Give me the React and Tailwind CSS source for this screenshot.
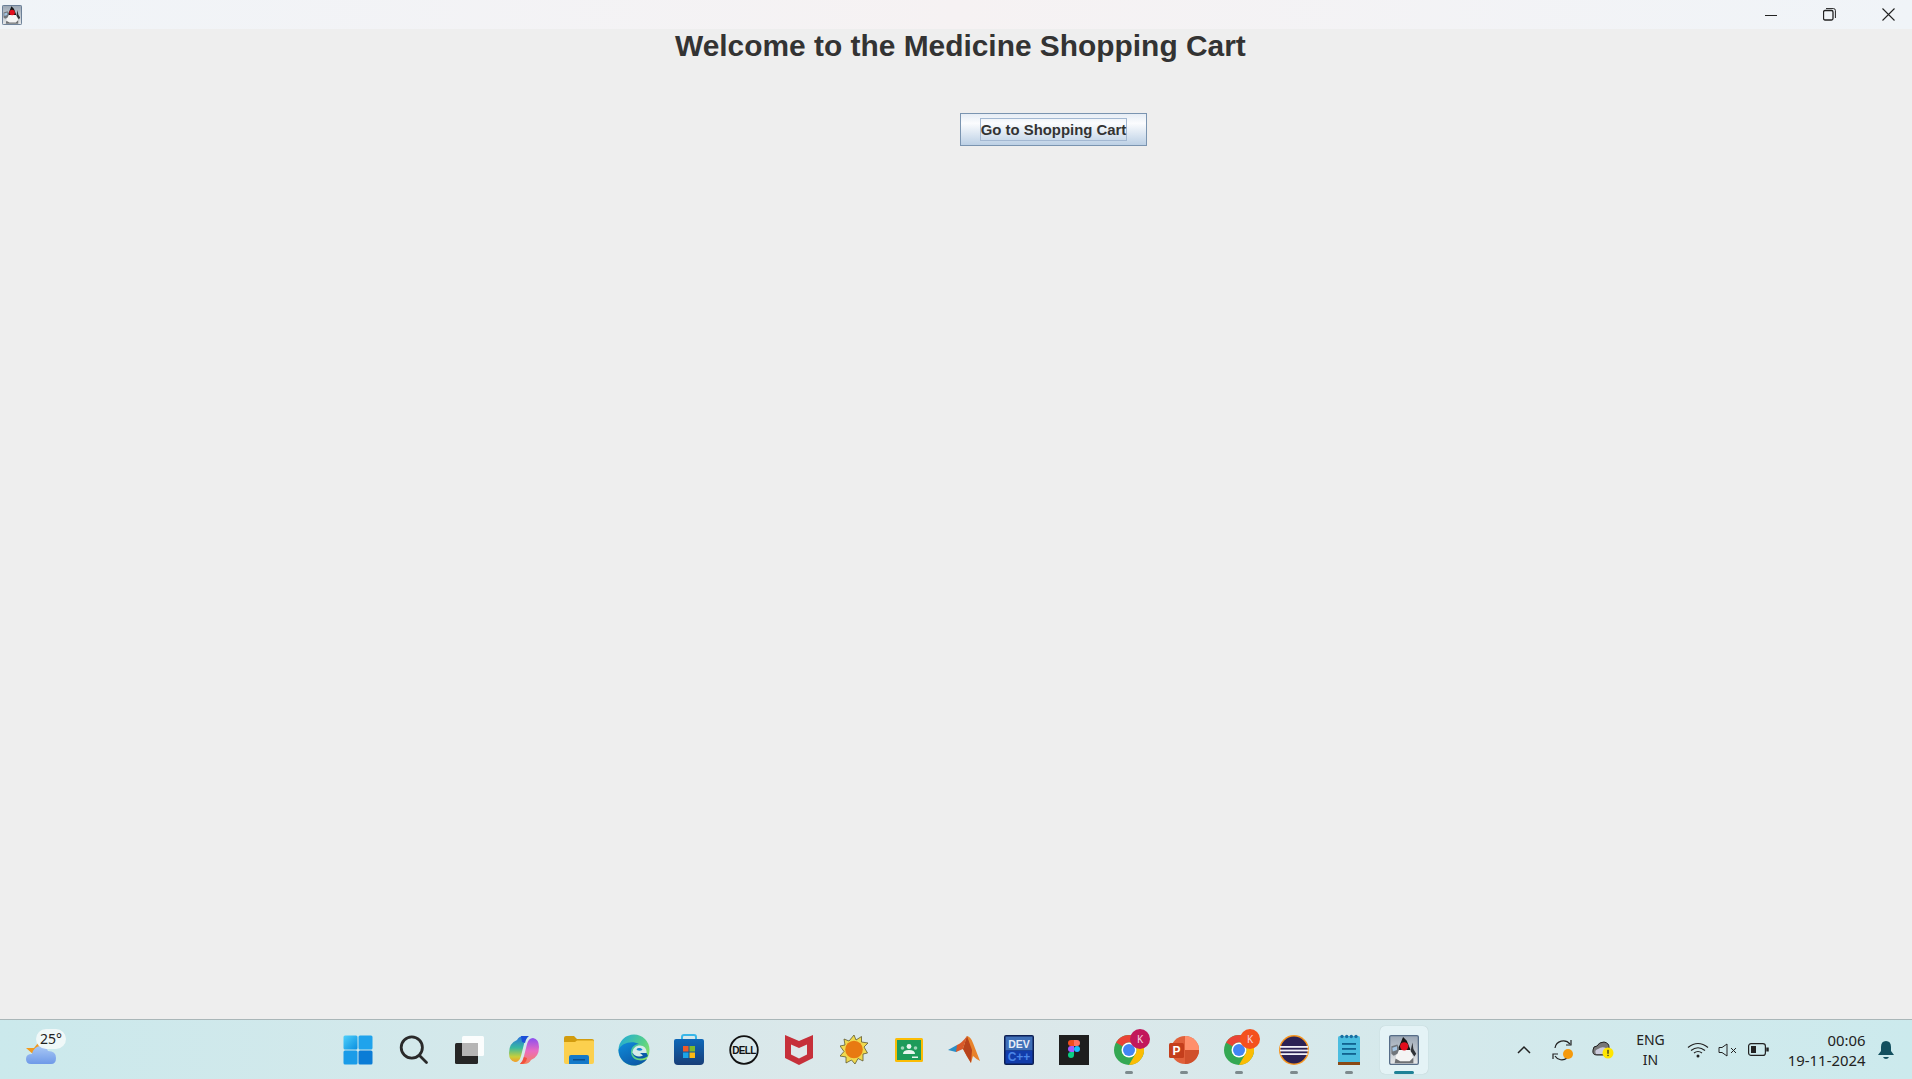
import React from "react";

const Java = ({ s = 32, id = "j" }) => (
  <svg width={s} height={s} viewBox="0 0 32 32">
    <defs>
      <linearGradient id={id} x1="0" y1="0" x2="0" y2="1">
        <stop offset="0" stopColor="#9aa6b4" />
        <stop offset="0.6" stopColor="#c6ccd3" />
        <stop offset="1" stopColor="#e8e9ea" />
      </linearGradient>
    </defs>
    <rect x="0.7" y="0.7" width="30.6" height="30.6" rx="1.5" fill={`url(#${id})`} stroke="#566d88" strokeWidth="1.4" />
    <path d="M9 15 L23 15 L26 25 L25 29 L7 29 L7 25 Z" fill="#f4f4f4" />
    <path d="M7 25 L12 28 L22 28 L26 24 L26 30 L6 30 Z" fill="#6f7174" />
    <path d="M15 2 L19 6 L23 16 L9 16 L13 7 Z" fill="#161616" />
    <path d="M2.5 12 L9 10 L11 15 L9 20 L5 22 L2.5 20 Z" fill="#70757b" />
    <path d="M3.5 13.5 L8.5 12 L8.5 16 L4 17.5 Z" fill="#a4c4e2" />
    <path d="M25 8 L26 15 L29 20 L27 23 L23 17 Z" fill="#2f3236" />
    <circle cx="16.2" cy="12" r="4.4" fill="#e30d1c" />
  </svg>
);

const Win = () => (
  <svg width="30" height="30" viewBox="0 0 30 30" className="-ml-[3px]">
    <defs>
      <linearGradient id="wa" x1="0" y1="0" x2="1" y2="1">
        <stop offset="0" stopColor="#4fd0fb" />
        <stop offset="1" stopColor="#0a8fe0" />
      </linearGradient>
    </defs>
    <rect x="0.5" y="0.5" width="14" height="14" rx="1.5" fill="url(#wa)" />
    <rect x="15.5" y="0.5" width="14" height="14" rx="1.5" fill="#1fa3ec" />
    <rect x="0.5" y="15.5" width="14" height="14" rx="1.5" fill="#1a9ce8" />
    <rect x="15.5" y="15.5" width="14" height="14" rx="1.5" fill="#0b7cd6" />
  </svg>
);

const Search = () => (
  <svg width="30" height="30" viewBox="0 0 30 30" fill="none" stroke="#2a2a2a" strokeWidth="2.8" strokeLinecap="round">
    <circle cx="12.8" cy="12.5" r="10.6" />
    <path d="M20.5 20.5 L27.5 27.5" />
  </svg>
);

const TaskView = () => (
  <svg width="30" height="30" viewBox="0 0 30 30">
    <rect x="1" y="8" width="23" height="21" rx="1.5" fill="#262626" />
    <rect x="8" y="1" width="22" height="20" rx="1.5" fill="#ffffff" fillOpacity="0.9" />
    <rect x="8" y="8" width="16" height="13" fill="#b5b5b5" />
  </svg>
);

const Copilot = () => (
  <svg width="30" height="28" viewBox="0 0 30 28">
    <defs>
      <linearGradient id="ca" x1="0" y1="0" x2="0" y2="1">
        <stop offset="0" stopColor="#2a6fe0" />
        <stop offset="0.45" stopColor="#37b8a0" />
        <stop offset="0.8" stopColor="#c9cf3a" />
        <stop offset="1" stopColor="#f59a2a" />
      </linearGradient>
      <linearGradient id="cb" x1="0" y1="0" x2="0" y2="1">
        <stop offset="0" stopColor="#8a4ff0" />
        <stop offset="0.5" stopColor="#ea6bc0" />
        <stop offset="1" stopColor="#f5825a" />
      </linearGradient>
    </defs>
    <path d="M8 4 Q10 0 15 0 L19 0 Q16 3 15 8 L12 20 Q10.5 26 6 26 Q0 25 0 17 Q0 7 8 4 Z" fill="url(#ca)" />
    <path d="M22 24 Q20 28 15 28 L11 28 Q14 25 15 20 L18 8 Q19.5 2 24 2 Q30 3 30 11 Q30 21 22 24 Z" fill="url(#cb)" />
    <path d="M12 0 L20 0 Q17 2 16 7 L13 6 Z" fill="#1b4fd8" />
    <path d="M11 28 Q14 25 15 21 L18 22 Q17 28 12 28 Z" fill="#f2503c" />
  </svg>
);

const Files = () => (
  <svg width="30" height="28" viewBox="0 0 30 28">
    <path d="M0 2 Q0 0 2 0 L10 0 L13 3 L28 3 Q30 3 30 5 L30 8 L0 8 Z" fill="#d29c0e" />
    <path d="M0 6 L11 6 L13 4.5 L29 4.5 Q30 4.5 30 6 L30 26 Q30 28 28 28 L2 28 Q0 28 0 26 Z" fill="#fcd04e" />
    <path d="M5 28 L5 21 Q5 19 7 19 L23 19 Q25 19 25 21 L25 28 Z" fill="#1479c9" />
    <rect x="9" y="23" width="12" height="1.5" fill="#0a4f8e" />
  </svg>
);

const Edge = () => (
  <svg width="32" height="32" viewBox="0 0 32 32">
    <defs>
      <linearGradient id="ea" x1="0" y1="0" x2="1" y2="0.6">
        <stop offset="0" stopColor="#1ea8df" />
        <stop offset="0.7" stopColor="#55d08a" />
        <stop offset="1" stopColor="#85e06a" />
      </linearGradient>
      <linearGradient id="eb" x1="0" y1="0" x2="0.6" y2="1">
        <stop offset="0" stopColor="#0f8ddb" />
        <stop offset="1" stopColor="#0c5aa8" />
      </linearGradient>
    </defs>
    <circle cx="16" cy="16" r="15.5" fill="url(#ea)" />
    <path d="M.5 16 C.5 25 8 31.5 16 31.5 C21 31.5 26 29 29 25 C24 27.5 16 27 13.5 21 C11.5 15 15.5 10 21 10 C14 6 3 9 .5 16 Z" fill="url(#eb)" />
    <path d="M14.5 19 C14.5 14 18 11.5 22 11.5 C26 11.5 29 14.5 28.5 19 Z" fill="#d6ebe9" />
    <path d="M18.5 15.5 C19.5 13.5 23.5 13.5 24.5 15.8 C23 17 20 17 18.5 15.5 Z" fill="#1587cf" />
    <path d="M14.5 19 C15.5 24 23 27 30 22 L28.5 19 Z" fill="#0b5ba8" />
    <path d="M14.8 19 C16 22 21 23.5 25 21.5 L22 19 Z" fill="#d6ebe9" />
  </svg>
);

const Store = () => (
  <svg width="30" height="32" viewBox="0 0 30 32">
    <defs>
      <linearGradient id="sa" x1="0" y1="0" x2="0" y2="1">
        <stop offset="0" stopColor="#0f68b8" />
        <stop offset="1" stopColor="#183e78" />
      </linearGradient>
    </defs>
    <path d="M8 6 L8 3 Q8 1 10 1 L20 1 Q22 1 22 3 L22 6" fill="none" stroke="#38b6e8" strokeWidth="2" />
    <path d="M0 7 Q0 5 2 5 L28 5 Q30 5 30 7 L30 27 Q30 31 26 31 L4 31 Q0 31 0 27 Z" fill="url(#sa)" />
    <rect x="9" y="12" width="5.5" height="5.5" fill="#f05a28" />
    <rect x="15.5" y="12" width="5.5" height="5.5" fill="#7fba2b" />
    <rect x="9" y="18.5" width="5.5" height="5.5" fill="#1ba4e8" />
    <rect x="15.5" y="18.5" width="5.5" height="5.5" fill="#fdb913" />
  </svg>
);

const Dell = () => (
  <svg width="30" height="30" viewBox="0 0 30 30">
    <circle cx="15" cy="15" r="13.8" fill="none" stroke="#111" strokeWidth="1.8" />
    <text x="15" y="18.6" textAnchor="middle" fontFamily="Liberation Sans, sans-serif" fontWeight="700" fontSize="10" letterSpacing="-0.6" fill="#111">DELL</text>
  </svg>
);

const McAfee = () => (
  <svg width="28" height="30" viewBox="0 0 28 30">
    <path d="M0 0 L14 6 L28 0 L28 23 L14 30 L0 23 Z" fill="#c6303a" />
    <path d="M6 9.5 L14 13 L22 9.5 L22 19.5 L14 23.5 L6 19.5 Z" fill="#dfe8ea" />
  </svg>
);

const Sun = () => (
  <svg width="28" height="30" viewBox="0 0 28 30">
    <path d="M14 0 L16 5 L21.5 1.5 L21.5 7 L28 8 L24 12 L27.5 18 L23 19 L23 26 L18 23.5 L15 29 L11.5 25 L6 28 L6 22 L0 21 L4 16.5 L0 11 L5 10 L4 4 L9 6 Z" fill="#f0d94e" stroke="#5f5a30" strokeWidth="0.8" />
    <circle cx="14" cy="14.5" r="8.8" fill="#e87a12" />
  </svg>
);

const Classroom = () => (
  <svg width="28" height="24" viewBox="0 0 28 24">
    <rect width="28" height="24" rx="1.5" fill="#fbbc04" />
    <rect x="2" y="2" width="24" height="20" fill="#1e9b5a" />
    <circle cx="14" cy="8.5" r="2.4" fill="#e9f5ee" />
    <circle cx="7.5" cy="10" r="1.8" fill="#9fd6b8" />
    <circle cx="20.5" cy="10" r="1.8" fill="#9fd6b8" />
    <path d="M8 16 Q8 12 14 12 Q20 12 20 16 Z" fill="#e9f5ee" />
    <rect x="17" y="18.5" width="6" height="1.5" fill="#e9f5ee" />
  </svg>
);

const Matlab = () => (
  <svg width="32" height="30" viewBox="0 0 32 30">
    <path d="M0 15 L9 10 L13 13 L8 17 Z" fill="#2b8fc7" />
    <path d="M9 10 Q14 8 19 1 L15 14 L8 17 Z" fill="#d9592a" />
    <path d="M19 1 Q23 2 25 8 L32 26 Q28 24 25 21 L23 28 Q18 20 15 14 Z" fill="#e8832b" />
    <path d="M19 1 L24 15 L23 28 Q18 20 15 14 Z" fill="#b8431c" />
  </svg>
);

const DevCpp = () => (
  <svg width="30" height="30" viewBox="0 0 30 30">
    <rect width="30" height="30" rx="2" fill="#0c1f55" />
    <rect x="1.5" y="1.5" width="27" height="14" fill="#3f6fb8" />
    <rect x="1.5" y="15.5" width="27" height="13" fill="#123caa" />
    <text x="15" y="12.5" textAnchor="middle" fontFamily="Liberation Sans, sans-serif" fontWeight="700" fontSize="10.5" fill="#e8eef8">DEV</text>
    <text x="15" y="26" textAnchor="middle" fontFamily="Liberation Sans, sans-serif" fontWeight="700" fontSize="12" fill="#4b86e8">C++</text>
  </svg>
);

const Figma = () => (
  <svg width="30" height="30" viewBox="0 0 30 30">
    <rect width="30" height="30" fill="#1e1e1e" />
    <path d="M9 8 A3 3 0 0 1 12 5 L15 5 L15 11 L12 11 A3 3 0 0 1 9 8 Z" fill="#f24e1e" />
    <path d="M15 5 L18 5 A3 3 0 0 1 18 11 L15 11 Z" fill="#ff7262" />
    <path d="M9 14 A3 3 0 0 1 12 11 L15 11 L15 17 L12 17 A3 3 0 0 1 9 14 Z" fill="#a259ff" />
    <circle cx="18" cy="14" r="3" fill="#1abcfe" />
    <path d="M9 20 A3 3 0 0 1 12 17 L15 17 L15 20 A3 3 0 0 1 9 20 Z" fill="#0acf83" />
  </svg>
);

const ChromeBase = () => (
  <svg width="30" height="30" viewBox="0 0 30 30">
    <circle cx="15" cy="15" r="15" fill="#34a853" />
    <path d="M15 0 A15 15 0 0 1 28 7.5 L15 7.5 A7.5 7.5 0 0 0 8.5 11.25 L2 7.5 A15 15 0 0 1 15 0 Z" fill="#ea4335" />
    <path d="M28 7.5 A15 15 0 0 1 15 30 L21.5 18.75 A7.5 7.5 0 0 0 21.5 11.25 L15 7.5 Z" fill="#fbbc04" />
    <circle cx="15" cy="15" r="7.5" fill="#fff" />
    <circle cx="15" cy="15" r="6" fill="#4285f4" />
  </svg>
);

const Chrome = ({ color }) => (
  <div className="relative w-[30px] h-[30px]">
    <ChromeBase />
    <div className={`absolute top-[-6px] left-[16px] w-5 h-5 rounded-full flex items-center justify-center text-[10px] leading-none text-[#f6d7e2] ${color}`}>K</div>
  </div>
);

const Ppt = () => (
  <svg width="30" height="30" viewBox="0 0 30 30">
    <circle cx="16" cy="15" r="14" fill="#e0603a" />
    <path d="M16 1 A14 14 0 0 1 30 15 L16 15 Z" fill="#ff8f6b" />
    <path d="M16 15 L30 15 A14 14 0 0 1 16 29 Z" fill="#d0502c" />
    <rect x="0" y="8" width="15" height="15" rx="1.5" fill="#c43e1c" />
    <text x="7.5" y="20" textAnchor="middle" fontFamily="Liberation Sans, sans-serif" fontWeight="700" fontSize="12" fill="#fff">P</text>
  </svg>
);

const Eclipse = () => (
  <svg width="30" height="30" viewBox="0 0 30 30">
    <circle cx="15" cy="15" r="15" fill="#f7941e" />
    <circle cx="15" cy="15" r="13.5" fill="#2c2255" />
    <rect x="1" y="11" width="28" height="1.8" fill="#f2f0f8" />
    <rect x="1" y="14.6" width="28.5" height="1.8" fill="#f2f0f8" />
    <rect x="1.5" y="18.2" width="27" height="1.8" fill="#f2f0f8" />
  </svg>
);

const Notepad = () => (
  <svg width="24" height="32" viewBox="0 0 24 32">
    <rect x="1" y="2" width="22" height="27" rx="1.5" fill="#4bbde0" />
    <rect x="1" y="28" width="22" height="3" fill="#8a4a16" />
    <g fill="#1a6ea0">
      <circle cx="5" cy="2.5" r="1.7" />
      <circle cx="9.7" cy="2.5" r="1.7" />
      <circle cx="14.3" cy="2.5" r="1.7" />
      <circle cx="19" cy="2.5" r="1.7" />
    </g>
    <g fill="#11628f">
      <rect x="5" y="9" width="14" height="1.8" />
      <rect x="5" y="14" width="14" height="1.8" />
      <rect x="5" y="19" width="14" height="1.8" />
    </g>
  </svg>
);

const Weather = () => (
  <div className="relative w-[50px] h-[40px]">
    <svg width="30" height="21" viewBox="0 0 30 21" className="absolute left-[1px] top-[13px]">
      <defs>
        <linearGradient id="cl" x1="0" y1="0" x2="0" y2="1">
          <stop offset="0" stopColor="#a9c8f5" />
          <stop offset="1" stopColor="#6f9ae8" />
        </linearGradient>
      </defs>
      <path d="M0 5 L8 5 L12 0 L16 8 L8 12 Z" fill="#f39a1d" />
      <path d="M5 21 Q0 21 0 16 Q0 11 6 11 Q8 3 15 3 Q20 3 22 8 Q30 8 30 15 Q30 21 25 21 Z" fill="url(#cl)" />
    </svg>
    <div className="absolute left-[11px] top-[-1px] w-[30px] h-[20px] rounded-full bg-[#f4f9f9]/90 text-[14px] leading-[20px] text-center text-[#222]">25°</div>
  </div>
);

const Icon = ({ children, running, active }) => (
  <div className="relative w-[55px] h-[50px] flex items-center justify-center">
    {active && <div className="absolute left-[3px] top-[1px] w-[48px] h-[48px] rounded-[5px] bg-[#e4f3f6] shadow-[0_0_1px_rgba(0,0,0,0.2)]" />}
    <div className="relative flex items-center justify-center">{children}</div>
    {running && <div className="absolute left-[23px] bottom-px w-2 h-[3px] rounded-full bg-[#7d8a8d]" />}
    {active && <div className="absolute left-[17px] bottom-px w-5 h-[3px] rounded-full bg-[#1f8296]" />}
  </div>
);

export default function App() {
  return (
    <div className="w-[1912px] h-[1079px] overflow-hidden flex flex-col bg-[#eeeeee] font-['Liberation_Sans',Arial,sans-serif]">
      {/* Window title bar */}
      <div className="h-[29px] shrink-0 flex items-center bg-gradient-to-r from-[#f0f4f8] via-[#f6f2f3] to-[#f0f4f8]">
        <div className="ml-[2px]"><Java s={20} id="jt" /></div>
        <div className="ml-auto mr-px flex items-center gap-[12.5px]">
          <div className="w-[46px] h-[29px] flex items-center justify-center">
            <svg width="12" height="12" viewBox="0 0 12 12"><path d="M0 6.5 H12" stroke="#222" strokeWidth="1" /></svg>
          </div>
          <div className="w-[46px] h-[29px] flex items-center justify-center">
            <svg width="13" height="13" viewBox="0 0 13 13" fill="none" stroke="#222" strokeWidth="1"><rect x="0.5" y="2.5" width="9.5" height="9.5" rx="1.5" strokeWidth="1.3" /><path d="M3 .6 H10.5 Q12.4 .6 12.4 2.5 V10" /></svg>
          </div>
          <div className="w-[46px] h-[29px] flex items-center justify-center">
            <svg width="13" height="13" viewBox="0 0 13 13"><path d="M.5 .5 L12.5 12.5 M12.5 .5 L.5 12.5" stroke="#222" strokeWidth="1.1" /></svg>
          </div>
        </div>
      </div>

      {/* Content */}
      <div className="flex-1 relative">
        <h1 className="ml-[675px] mt-0 text-[29.9px] leading-[34px] font-bold text-[#333333] whitespace-nowrap">Welcome to the Medicine Shopping Cart</h1>
        <button className="ml-[960px] mt-[50px] w-[187px] h-[33px] border border-[#7a94b0] bg-gradient-to-b from-[#e6edf5] via-[#fbfcfe] via-30% to-[#bcd0e5] flex items-center justify-center">
          <span className="border border-[#a3b8d2] h-[23px] w-[147px] pt-[2px] flex items-center justify-center text-[14.9px] font-bold text-[#333333] whitespace-nowrap">Go to Shopping Cart</span>
        </button>
      </div>

      {/* Taskbar */}
      <div className="h-[60px] shrink-0 border-t border-[#a9b6b8] flex items-center bg-gradient-to-r from-[#cbe9ec] via-[#dde8ea] to-[#cceaed] font-['Noto_Sans',sans-serif] text-[#222]">
        <div className="ml-[25px] w-[306.5px]"><Weather /></div>
        <div className="flex items-center">
          <Icon><Win /></Icon>
          <Icon><Search /></Icon>
          <Icon><TaskView /></Icon>
          <Icon><Copilot /></Icon>
          <Icon><Files /></Icon>
          <Icon><Edge /></Icon>
          <Icon><Store /></Icon>
          <Icon><Dell /></Icon>
          <Icon><McAfee /></Icon>
          <Icon><Sun /></Icon>
          <Icon><Classroom /></Icon>
          <Icon><Matlab /></Icon>
          <Icon><DevCpp /></Icon>
          <Icon><Figma /></Icon>
          <Icon running><Chrome color="bg-[#c2185b]" /></Icon>
          <Icon running><Ppt /></Icon>
          <Icon running><Chrome color="bg-[#f4511e]" /></Icon>
          <Icon running><Eclipse /></Icon>
          <Icon running><Notepad /></Icon>
          <Icon active><Java s={30} id="jb" /></Icon>
        </div>
        {/* Tray */}
        <div className="ml-[82px] w-[20px] flex justify-center">
          <svg width="14" height="9" viewBox="0 0 14 9" fill="none" stroke="#222" strokeWidth="1.5"><path d="M1 8 L7 2 L13 8" /></svg>
        </div>
        <div className="ml-[18px]">
          <svg width="22" height="22" viewBox="0 0 22 22" fill="none" stroke="#222" strokeWidth="1.2">
            <path d="M3 9 A8.5 8.5 0 0 1 18 5" />
            <path d="M19 1 V6 H14" />
            <path d="M15 19 A8 8 0 0 1 3 17" />
            <path d="M1 20 V15 H6" />
            <circle cx="16" cy="15" r="5" fill="#f59a0c" stroke="none" />
          </svg>
        </div>
        <div className="ml-[18px]">
          <svg width="22" height="18" viewBox="0 0 22 18">
            <path d="M5 14 Q0 14 1 9 Q1 5 5 5 Q7 1 12 1 Q17 2 17 6 L17 14 Z" fill="#777" stroke="#222" strokeWidth="1" />
            <path d="M4 13 Q2 9 6 8 Q10 5 14 7 L14 13 Z" fill="#ccd" />
            <circle cx="16" cy="12" r="5.5" fill="#ffe600" />
            <rect x="15.4" y="8.8" width="1.2" height="4" fill="#222" />
            <rect x="15.4" y="13.8" width="1.2" height="1.3" fill="#222" />
          </svg>
        </div>
        <div className="ml-[20px] w-[34px] text-center text-[14px] leading-[20px]">
          <div>ENG</div>
          <div>IN</div>
        </div>
        <div className="ml-[19px]">
          <svg width="22" height="16" viewBox="0 0 22 16" fill="none" stroke="#222" strokeWidth="1.2">
            <path d="M1 5.5 Q11 -2.5 21 5.5" />
            <path d="M4 8.5 Q11 3 18 8.5" />
            <path d="M7 11 Q11 8 15 11" />
            <circle cx="11" cy="14" r="1.5" fill="#222" stroke="none" />
          </svg>
        </div>
        <div className="ml-[9px]">
          <svg width="20" height="14" viewBox="0 0 20 14" fill="none" stroke="#222" strokeWidth="1">
            <path d="M1 4.5 H4 L9 1 V13 L4 9.5 H1 Z" />
            <path d="M13 5 L18 10 M18 5 L13 10" />
          </svg>
        </div>
        <div className="ml-[10px]">
          <svg width="21" height="13" viewBox="0 0 21 13" fill="none" stroke="#222" strokeWidth="1.2">
            <rect x="0.6" y="0.6" width="16.8" height="11.8" rx="2.5" />
            <rect x="3" y="3" width="5" height="7" fill="#222" stroke="none" />
            <path d="M19.5 4.5 V8.5" strokeWidth="2.5" />
          </svg>
        </div>
        <div className="ml-[11px] w-[86px] text-right text-[14.9px] leading-[20px] whitespace-nowrap">
          <div>00:06</div>
          <div>19-11-2024</div>
        </div>
        <div className="ml-[12px]">
          <svg width="16" height="20" viewBox="0 0 16 20">
            <path d="M8 1 Q13 1 13 7 L13 11 L16 15 L0 15 L3 11 L3 7 Q3 1 8 1 Z" fill="#13505f" />
            <path d="M5 17 H11 Q10 19 8 19 Q6 19 5 17 Z" fill="#13505f" />
          </svg>
        </div>
      </div>
    </div>
  );
}
